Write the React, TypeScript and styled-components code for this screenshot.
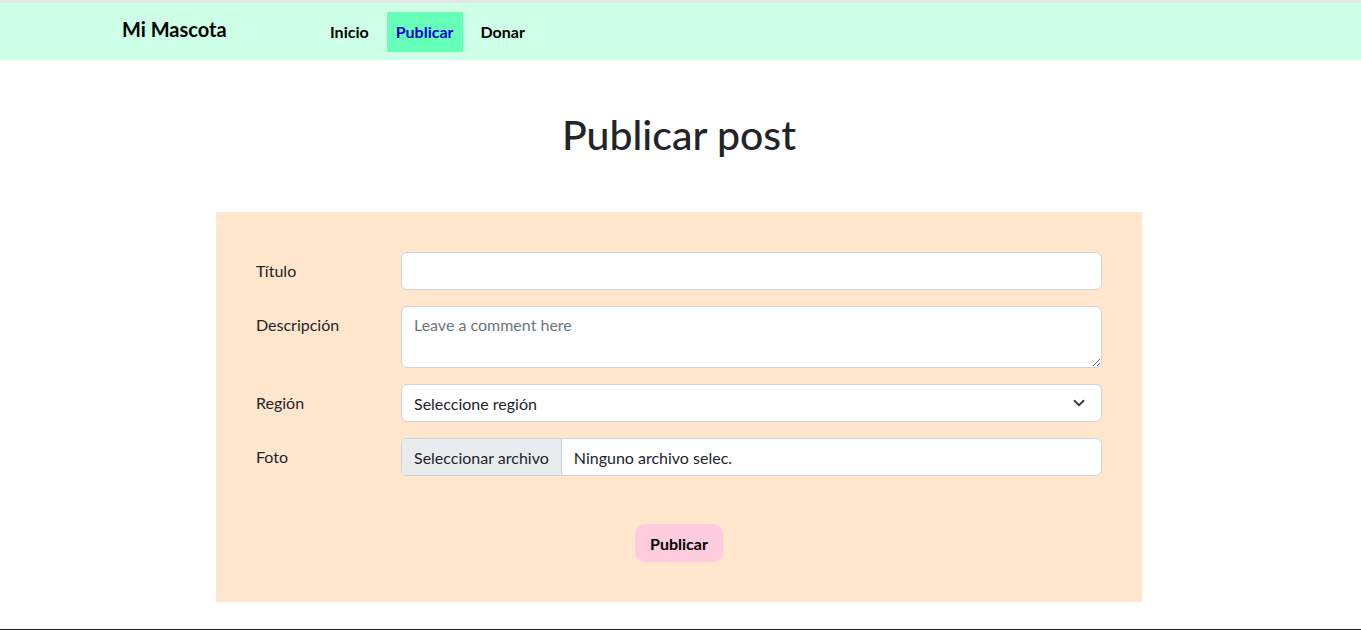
import React from 'react';
import styled, { createGlobalStyle } from 'styled-components';

const Global = createGlobalStyle`
  html, body {
    margin: 0;
    padding: 0;
    background: #fff;
    font-family: Lato, "Noto Sans", sans-serif;
    color: #212529;
  }
  * { box-sizing: border-box; }
`;

const Page = styled.div`
  min-height: 630px;
  display: flex;
  flex-direction: column;
  border-top: 3px solid #e6e6e6;
`;

const Navbar = styled.nav`
  height: 57px;
  background: #ccffe6;
  display: flex;
  align-items: center;
  padding-left: 122px;
`;

const Brand = styled.div`
  font-size: 20px;
  font-weight: bold;
  color: #000;
  width: 190px;
  margin-top: -6px;
`;

const NavLinks = styled.div`
  display: flex;
  align-items: center;
`;

const NavLink = styled.a<{ active?: boolean }>`
  display: flex;
  align-items: center;
  height: 40px;
  padding: 0 9px;
  margin-left: 9px;
  font-size: 16px;
  font-weight: bold;
  text-decoration: none;
  color: ${(p) => (p.active ? '#0000cc' : '#000')};
  background: ${(p) => (p.active ? '#66ffb8' : 'transparent')};
`;

const Main = styled.main`
  padding-right: 3px;
`;

const Title = styled.h1`
  margin: 51px 0 53px;
  text-align: center;
  font-size: 41px;
  font-weight: 500;
  line-height: 48px;
`;

const Panel = styled.form`
  width: 926px;
  margin: 0 auto;
  background: #ffe6cc;
  padding: 40px;
  display: flex;
  flex-direction: column;
  gap: 16px;
`;

const Row = styled.div`
  display: grid;
  grid-template-columns: 145px 1fr;
  align-items: start;
`;

const Label = styled.label`
  font-size: 16px;
  line-height: 38px;
`;

const fieldCss = `
  width: 100%;
  border: 1px solid #ced4da;
  border-radius: 6px;
  background: #fff;
  font-family: inherit;
  font-size: 16px;
  color: #212529;
  padding: 6px 12px;
  outline: none;
`;

const Input = styled.input`
  ${fieldCss};
  height: 38px;
`;

const TextArea = styled.textarea`
  ${fieldCss};
  height: 62px;
  resize: vertical;
  line-height: 24px;
  &::placeholder {
    color: #6c757d;
  }
`;

const SelectBox = styled.div`
  ${fieldCss};
  height: 38px;
  display: flex;
  align-items: center;
  justify-content: space-between;
  padding-right: 16px;
`;

const FileBox = styled.div`
  ${fieldCss};
  height: 38px;
  padding: 0;
  display: flex;
  align-items: stretch;
  overflow: hidden;
`;

const FileButton = styled.span`
  background: #e9ecef;
  border-right: 1px solid #ced4da;
  padding: 0 12px;
  display: flex;
  align-items: center;
`;

const FileName = styled.span`
  padding: 0 12px;
  display: flex;
  align-items: center;
`;

const Actions = styled.div`
  display: flex;
  justify-content: center;
  padding-top: 32px;
`;

const Submit = styled.button`
  background: #ffccdf;
  border: none;
  border-radius: 10px;
  height: 38px;
  padding: 0 15px;
  font-family: inherit;
  font-size: 16px;
  font-weight: bold;
  color: #000;
`;

const Footer = styled.div`
  margin-top: auto;
  border-bottom: 1px solid #222;
`;

function Chevron() {
  return (
    <svg width="12" height="12" viewBox="0 0 16 16">
      <path
        d="M2 5l6 6 6-6"
        fill="none"
        stroke="#343a40"
        strokeWidth="2.4"
        strokeLinecap="round"
        strokeLinejoin="round"
      />
    </svg>
  );
}

function App() {
  return (
    <>
      <Global />
      <Page>
        <Navbar>
          <Brand>Mi Mascota</Brand>
          <NavLinks>
            <NavLink href="#">Inicio</NavLink>
            <NavLink href="#" active>
              Publicar
            </NavLink>
            <NavLink href="#">Donar</NavLink>
          </NavLinks>
        </Navbar>
        <Main>
          <Title>Publicar post</Title>
          <Panel onSubmit={(e) => e.preventDefault()}>
            <Row>
              <Label>Título</Label>
              <Input type="text" />
            </Row>
            <Row>
              <Label>Descripción</Label>
              <TextArea placeholder="Leave a comment here" />
            </Row>
            <Row>
              <Label>Región</Label>
              <SelectBox>
                <span>Seleccione región</span>
                <Chevron />
              </SelectBox>
            </Row>
            <Row>
              <Label>Foto</Label>
              <FileBox>
                <FileButton>Seleccionar archivo</FileButton>
                <FileName>Ninguno archivo selec.</FileName>
              </FileBox>
            </Row>
            <Actions>
              <Submit type="submit">Publicar</Submit>
            </Actions>
          </Panel>
        </Main>
        <Footer />
      </Page>
    </>
  );
}

export default App;
